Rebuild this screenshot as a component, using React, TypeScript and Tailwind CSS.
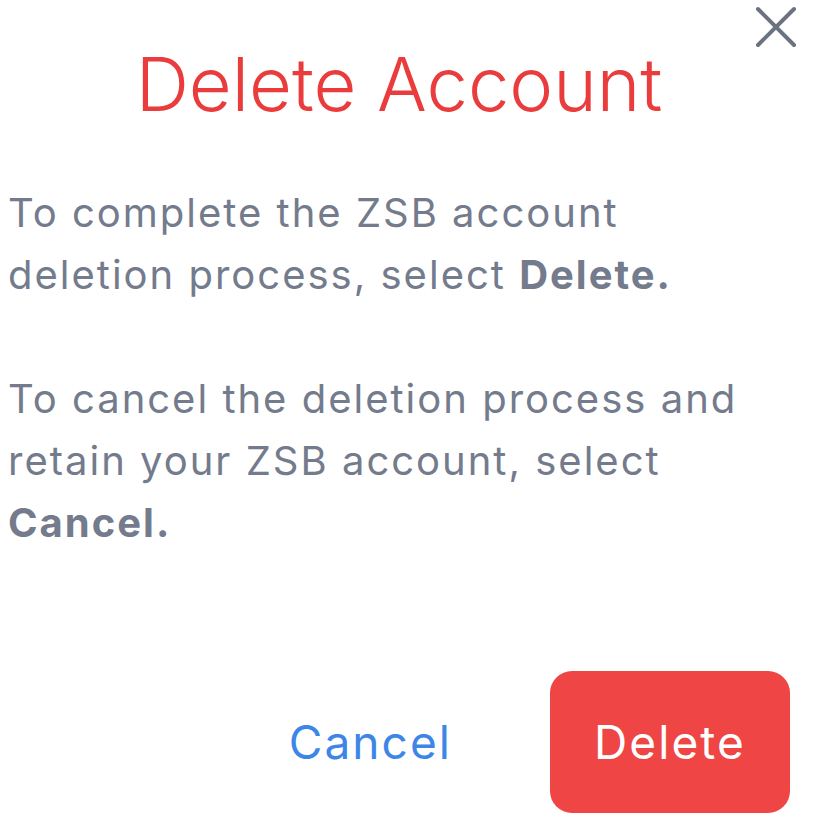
export default function App() {
  return (
    <div className="relative w-[817px] h-[826px] bg-white overflow-hidden" style={{ fontFamily: 'Inter, "Noto Sans", sans-serif' }}>
      <button className="absolute top-[6px] right-[20px] w-[42px] h-[42px] text-[#6b7280]" aria-label="Close">
        <svg viewBox="0 0 42 42" className="w-full h-full" fill="none" stroke="currentColor" strokeWidth="4" strokeLinecap="round">
          <path d="M3 3 L39 39 M39 3 L3 39" />
        </svg>
      </button>

      <div className="flex flex-col pl-[8px] pr-[27px] pt-[44px]">
        <h1 className="text-center text-[74px] leading-[80px] font-light text-[#ea3c3c]">Delete Account</h1>

        <div className="mt-[58px] text-[40px] leading-[62px] text-[#737b8c] tracking-[0.05em]">
          <p>
            To complete the ZSB account deletion process, select <b className="font-bold">Delete.</b>
          </p>
          <p className="mt-[62px]">
            To cancel the deletion process and retain your ZSB account, select <b className="font-bold">Cancel.</b>
          </p>
        </div>

        <div className="mt-[117px] flex items-center justify-end gap-[98px]">
          <button className="text-[46px] text-[#3d86e8] tracking-[0.045em]">Cancel</button>
          <button className="w-[240px] h-[142px] rounded-[22px] bg-[#f04545] text-white text-[46px] tracking-[0.045em]">Delete</button>
        </div>
      </div>
    </div>
  );
}
